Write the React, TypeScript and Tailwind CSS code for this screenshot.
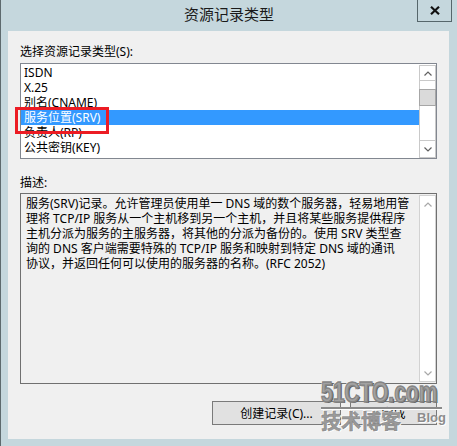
import React from "react";

function Chevron({ dir, color }: { dir: "up" | "down"; color: string }) {
  return (
    <svg width="8" height="5" viewBox="0 0 8 5" className="block">
      {dir === "up" ? (
        <polyline points="0.5,4.5 4,1 7.5,4.5" fill="none" stroke={color} strokeWidth="1.2" />
      ) : (
        <polyline points="0.5,0.5 4,4 7.5,0.5" fill="none" stroke={color} strokeWidth="1.2" />
      )}
    </svg>
  );
}

const items = ["ISDN", "X.25", "别名(CNAME)", "服务位置(SRV)", "负责人(RP)", "公共密钥(KEY)"];

const desc = [
  "服务(SRV)记录。允许管理员使用单一 DNS 域的数个服务器，轻易地用管",
  "理将 TCP/IP 服务从一个主机移到另一个主机，并且将某些服务提供程序",
  "主机分派为服务的主服务器，将其他的分派为备份的。使用 SRV 类型查",
  "询的 DNS 客户端需要特殊的 TCP/IP 服务和映射到特定 DNS 域的通讯",
  "协议，并返回任何可以使用的服务器的名称。(RFC 2052)",
];

export default function App() {
  return (
    <div className="relative w-[457px] h-[446px] bg-[#c5d7dd] border-l border-[#5e6a6e] flex flex-col overflow-hidden text-[12px] text-black font-['Noto_Sans','Noto_Sans_CJK_SC',sans-serif]">
      {/* Title bar */}
      <div className="h-[31px] shrink-0 grid grid-cols-[1fr_auto_1fr] items-start">
        <div />
        <div className="pt-[4px] text-[15px] leading-[20px] text-[#1a1a1a]">资源记录类型</div>
        <div className="flex justify-end pr-[5px]">
          <div className="w-[35px] h-[22px] border-x border-b border-[#56666b] flex items-center justify-center">
            <svg width="10" height="9" viewBox="0 0 10 9">
              <path d="M1 0.8 L9 8.2 M9 0.8 L1 8.2" stroke="#111" strokeWidth="2.2" />
            </svg>
          </div>
        </div>
      </div>

      {/* Client area */}
      <div className="ml-[7px] w-[441px] h-[408px] bg-[#f0f0f0] pl-[12px] pt-[13px] flex flex-col">
        <div className="leading-[15px] h-[15px]">选择资源记录类型(S):</div>

        {/* List box */}
        <div className="mt-[4px] w-[417px] h-[96px] border border-[#828790] bg-white flex">
          <div className="flex-1 pt-[1px]">
            {items.map((t, i) => (
              <div
                key={t}
                className={
                  i === 3
                    ? "h-[15px] leading-[15px] pl-[3px] bg-[#3399ff] text-white whitespace-nowrap"
                    : "h-[15px] leading-[15px] pl-[3px] whitespace-nowrap"
                }
              >
                {t}
              </div>
            ))}
          </div>
          <div className="w-[17px] pt-[1px] flex flex-col">
            <div className="flex-1 border border-[#c9c9c9] flex flex-col bg-white">
              <div className="h-[15px] border-b border-[#c9c9c9] flex items-center justify-center">
                <Chevron dir="up" color="#606060" />
              </div>
              <div className="h-[8px]" />
              <div className="h-[17px] -mx-[1px] border border-[#a6a6a6] bg-[#dadada]" />
              <div className="flex-1" />
              <div className="h-[17px] border-t border-[#c9c9c9] flex items-center justify-center">
                <Chevron dir="down" color="#606060" />
              </div>
            </div>
          </div>
        </div>

        <div className="mt-[16px] leading-[15px] h-[15px]">描述:</div>

        {/* Description box */}
        <div className="mt-[3px] w-[417px] h-[191px] border border-[#707070] bg-[#f0f0f0] flex">
          <div className="flex-1 pl-[5px] pt-[2px] leading-[15px] whitespace-nowrap overflow-hidden">
            {desc.map((l) => (
              <div key={l} className="h-[15px]">
                {l}
              </div>
            ))}
          </div>
          <div className="w-[17px] py-[1px] flex flex-col">
            <div className="flex-1 border border-[#d2d2d2] bg-white flex flex-col">
              <div className="h-[16px] flex items-center justify-center">
                <Chevron dir="up" color="#a8a8a8" />
              </div>
              <div className="flex-1" />
              <div className="h-[16px] flex items-center justify-center">
                <Chevron dir="down" color="#a8a8a8" />
              </div>
            </div>
          </div>
        </div>

        {/* Buttons */}
        <div className="mt-[17px] flex">
          <div className="ml-[192px] w-[129px] h-[24px] border border-[#7a7a7a] bg-[#e1e1e1] flex items-center justify-center leading-[15px]">
            创建记录(C)...
          </div>
          <div className="ml-[9px] w-[87px] h-[24px] border border-[#7a7a7a] bg-[#e1e1e1] flex items-center justify-center leading-[15px]">
            完成
          </div>
        </div>
      </div>

      {/* Red annotation rectangle */}
      <div className="absolute left-[14px] top-[107px] w-[94px] h-[27px] border-[3px] border-[#ec1c24]" />

      {/* 51CTO watermark */}
      <div className="absolute left-[320px] top-[377px] h-[30px] w-[170px] origin-left scale-x-[0.7] text-[30px] leading-[30px] font-bold text-[#a2a2a2] whitespace-nowrap font-['Liberation_Sans',sans-serif] [-webkit-text-stroke:1.5px_#858585] [text-shadow:2px_1px_0_#5f5f5f,-1px_-1px_0_#fff]">
        51CTO.com
      </div>
      <div className="absolute left-[320px] top-[407px] w-[121px] h-[2px] bg-[#8a8a8a] shadow-[0_1px_0_#fff]" />
      <div className="absolute left-[320px] top-[411px] text-[20px] leading-[20px] font-bold text-[#9a9a9a] whitespace-nowrap font-['Noto_Sans_CJK_SC',sans-serif] [-webkit-text-stroke:0.5px_#808080] [text-shadow:1px_1px_0_#fff,-1px_-1px_0_#fff]">
        技术博客
      </div>
      <div className="absolute left-[416px] top-[411px] text-[13px] leading-[13px] font-bold text-[#8c8c8c] whitespace-nowrap font-['Liberation_Sans',sans-serif] [text-shadow:1px_1px_0_#fff]">
        Blog
      </div>
    </div>
  );
}
